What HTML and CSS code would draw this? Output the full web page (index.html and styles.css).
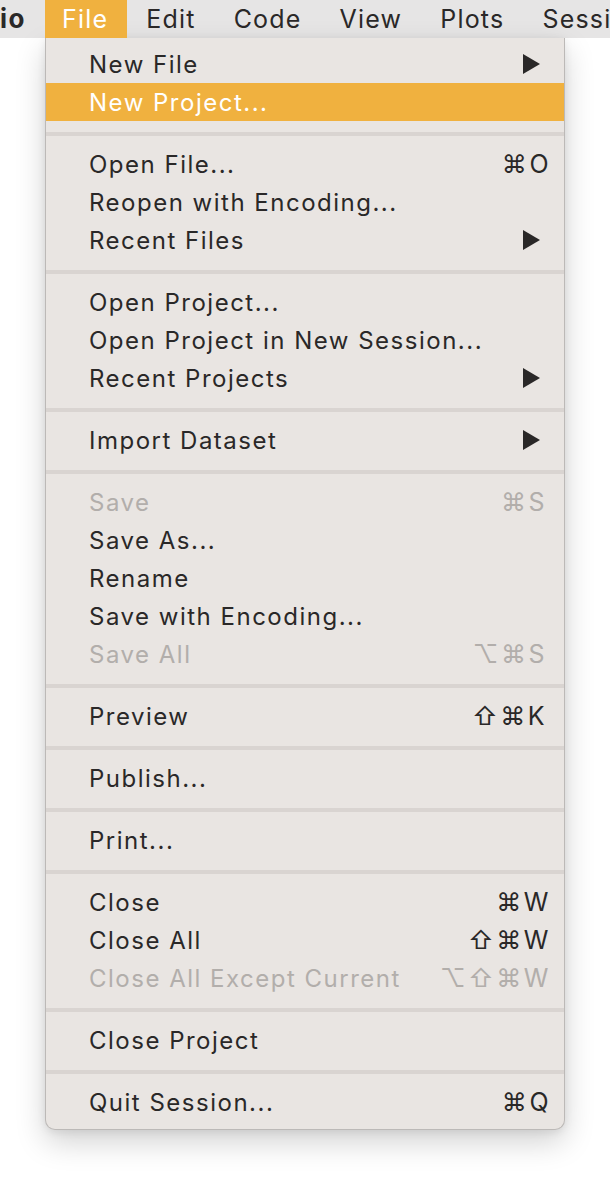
FILE: index.html
```html
<!DOCTYPE html>
<html lang="en">
<head>
<meta charset="utf-8">
<title>File menu</title>
<link rel="stylesheet" href="styles.css">
</head>
<body>
<header class="menubar">
  <span class="app">io</span>
  <span class="mb-item active">File</span>
  <span class="mb-item">Edit</span>
  <span class="mb-item">Code</span>
  <span class="mb-item">View</span>
  <span class="mb-item">Plots</span>
  <span class="mb-item">Session</span>
</header>
<div class="menu">
  <div class="row"><span class="label">New File</span><span class="arrow"></span></div>
  <div class="row hl"><span class="label">New Project...</span></div>
  <div class="sep"></div>
  <div class="row"><span class="label">Open File...</span><span class="key">⌘O</span></div>
  <div class="row"><span class="label">Reopen with Encoding...</span></div>
  <div class="row"><span class="label">Recent Files</span><span class="arrow"></span></div>
  <div class="sep"></div>
  <div class="row"><span class="label">Open Project...</span></div>
  <div class="row"><span class="label">Open Project in New Session...</span></div>
  <div class="row"><span class="label">Recent Projects</span><span class="arrow"></span></div>
  <div class="sep"></div>
  <div class="row"><span class="label">Import Dataset</span><span class="arrow"></span></div>
  <div class="sep"></div>
  <div class="row off"><span class="label">Save</span><span class="key k-s">⌘S</span></div>
  <div class="row"><span class="label">Save As...</span></div>
  <div class="row"><span class="label">Rename</span></div>
  <div class="row"><span class="label">Save with Encoding...</span></div>
  <div class="row off"><span class="label">Save All</span><span class="key k-s">⌥⌘S</span></div>
  <div class="sep"></div>
  <div class="row"><span class="label">Preview</span><span class="key k-s">⇧⌘K</span></div>
  <div class="sep"></div>
  <div class="row"><span class="label">Publish...</span></div>
  <div class="sep"></div>
  <div class="row"><span class="label">Print...</span></div>
  <div class="sep"></div>
  <div class="row"><span class="label">Close</span><span class="key k-w">⌘W</span></div>
  <div class="row"><span class="label">Close All</span><span class="key k-w">⇧⌘W</span></div>
  <div class="row off"><span class="label">Close All Except Current</span><span class="key k-w">⌥⇧⌘W</span></div>
  <div class="sep"></div>
  <div class="row"><span class="label">Close Project</span></div>
  <div class="sep"></div>
  <div class="row"><span class="label">Quit Session...</span><span class="key">⌘Q</span></div>
</div>
</body>
</html>
```
FILE: styles.css
```css
html, body {
  margin: 0;
  padding: 0;
  background: #ffffff;
  width: 610px;
  height: 1184px;
  overflow: hidden;
}
body {
  font-family: Inter, "Noto Sans", "DejaVu Sans", sans-serif;
  color: #2a2828;
  letter-spacing: 1.5px;
}
.menubar {
  display: flex;
  height: 38px;
  align-items: center;
  background: #e6e5e5;
  font-size: 25px;
  white-space: nowrap;
  overflow: hidden;
  letter-spacing: 1.2px;
}
.app {
  font-weight: 700;
  padding: 0 19px 0 0;
  line-height: 38px;
  letter-spacing: 1.5px;
  font-size: 26px;
}
.mb-item {
  padding: 0 19px;
  line-height: 38px;
}
.mb-item.active {
  background: #f0b13f;
  color: #ffffff;
  padding: 0 19px 0 17px;
}
.menu {
  margin-left: 45px;
  width: 518px;
  background: #e9e5e2;
  border: 1px solid #bcb9b7;
  border-top: none;
  border-radius: 0 0 10px 10px;
  padding: 7px 0 8px;
  box-shadow: 0 12px 30px rgba(0, 0, 0, 0.18), 0 2px 8px rgba(0, 0, 0, 0.08);
  font-size: 24px;
}
.row {
  height: 38px;
  display: flex;
  align-items: center;
  justify-content: space-between;
  padding: 0 13px 0 43px;
  white-space: nowrap;
}
.row.hl {
  background: #f0b13f;
  color: #ffffff;
}
.row.off {
  color: #b2aeab;
}
.key {
  font-size: 25px;
  letter-spacing: 2.5px;
}
.k-s {
  margin-right: 4px;
}
.arrow {
  width: 0;
  height: 0;
  border-left: 17px solid #2a2828;
  border-top: 10px solid transparent;
  border-bottom: 10px solid transparent;
  margin-right: 11px;
}
.sep {
  height: 4px;
  background: #d9d4d1;
  margin: 11px 0 9px;
}
```
